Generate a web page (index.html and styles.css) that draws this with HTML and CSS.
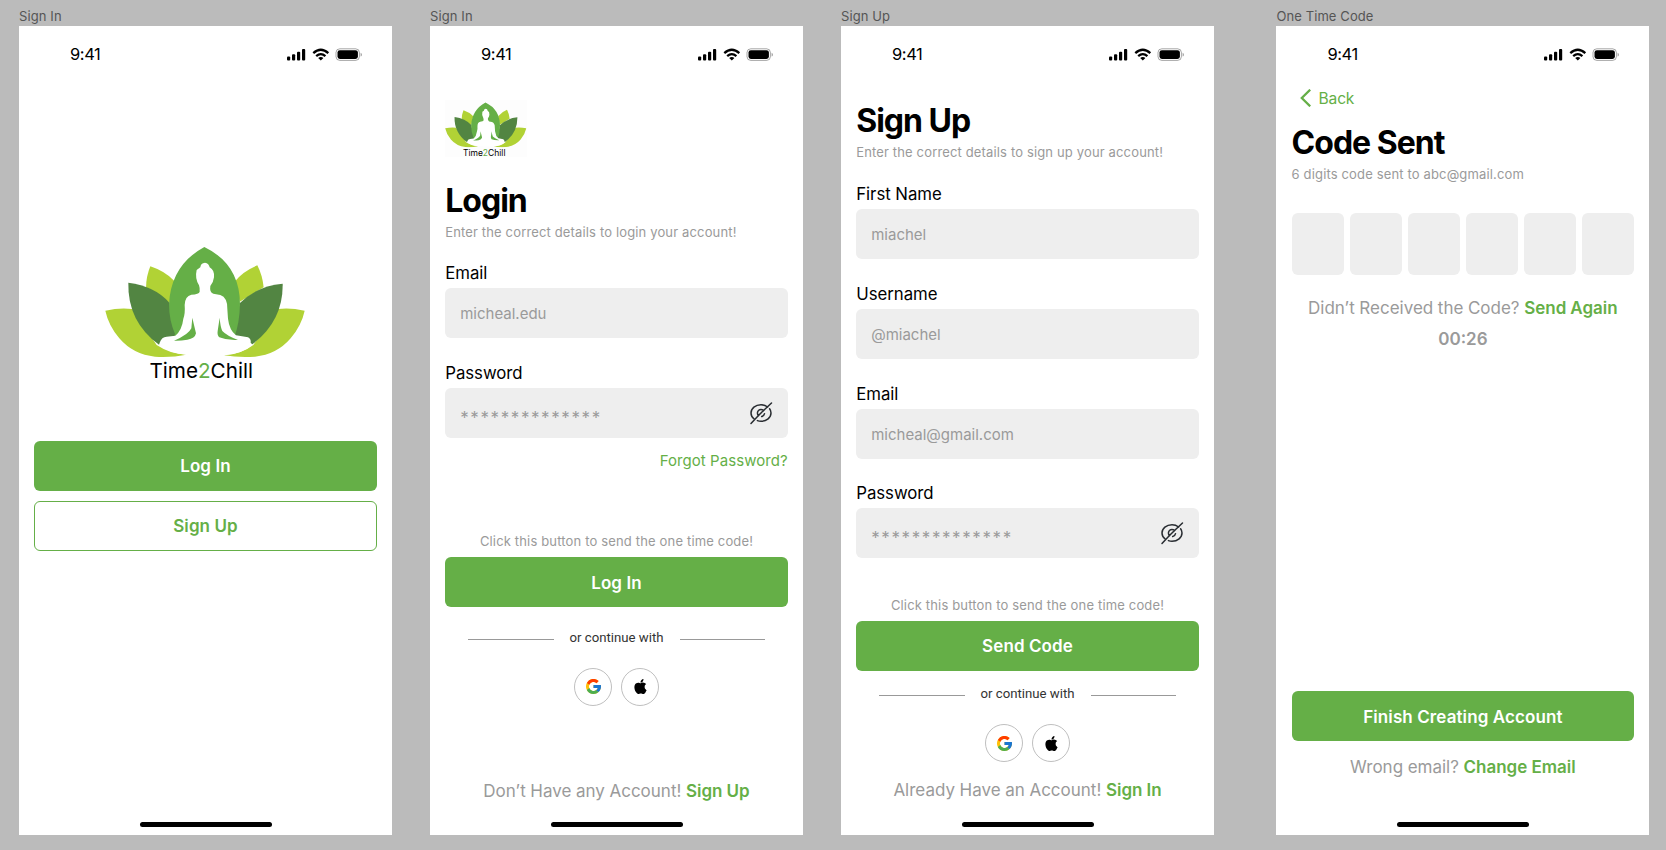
FILE: index.html
```html
<!DOCTYPE html>
<html lang="en">
<head>
<meta charset="utf-8">
<title>Time2Chill</title>
<link rel="stylesheet" href="styles.css">
</head>
<body>
<svg class="defs" aria-hidden="true">
  <symbol id="logo" viewBox="45 48 600 336">
    <path fill="#b1d235" d="M46 242Q90 232 126 237L200 345Q240 372 289 374Q245 383 195 380Q130 374 88 325Q55 285 46 242Z"/>
    <path fill="#b1d235" d="M644 242Q600 232 564 237L490 345Q455 372 402 376Q445 383 495 380Q560 374 602 325Q635 285 644 242Z"/>
    <path fill="#b1d235" d="M181 109Q226 124 253 153L238 220L168 175Q168 140 181 109Z"/>
    <path fill="#b1d235" d="M502 106Q460 123 436 153L449 215L521 172Q517 135 502 106Z"/>
    <path fill="#528542" d="M115 158Q195 168 238 218L262 318L208 345Q112 275 115 158Z"/>
    <path fill="#528542" d="M578 161Q500 168 449 220L430 318L484 345Q580 275 578 161Z"/>
    <path fill="#65af47" d="M343 51Q449 102 450 222Q449 278 433 322L445 333L250 333L255 312Q237 270 237 222Q243 105 343 51Z"/>
    <path fill="#fff" d="M345 98Q357 100 359 112Q374 120 372 142Q370 158 361 168Q358 188 370 191L391 195Q413 203 412 237L414 266Q418 300 438 316L474 322Q484 328 482 338L488 344Q455 372 402 376L289 374Q240 370 207 345L209 338Q215 320 230 320L256 317Q276 300 280 266Q286 250 284 225Q285 198 304 194Q327 193 329 185Q330 174 327 166Q314 145 320 120L331 112Q332 99 345 98Z"/>
    <path fill="#65af47" d="M307 263Q312 285 318 310Q315 326 292 329Q270 333 252 332Q296 314 304 295Z"/>
    <path fill="#65af47" d="M389 263Q391 290 397 303Q410 317 444 330Q412 332 388 322Q381 316 383 303Z"/>
  </symbol>
  <symbol id="status" viewBox="0 0 75 14">
    <rect x="0" y="8.5" width="3.2" height="4" rx="1"/><rect x="5" y="6.3" width="3.2" height="6.2" rx="1"/><rect x="10" y="3.8" width="3.2" height="8.7" rx="1"/><rect x="15" y="1" width="3.2" height="11.5" rx="1"/>
    <g fill="none" stroke="#000" stroke-width="2.3"><path d="M26.3 5.2Q33.8-1.6 41.3 5.2"/><path d="M29.2 8.2Q33.8 4.1 38.4 8.2"/></g>
    <path d="M31.2 9.9Q33.8 8 36.4 9.9L33.8 12.6Z"/>
    <rect x="49" y=".8" width="23.4" height="11.6" rx="3.8" fill="none" stroke="#000" stroke-opacity=".35"/>
    <rect x="50.500" y="2.2" width="20.4" height="8.8" rx="2.4"/>
    <path d="M73.600 4.8Q74.900 5.3 74.900 6.7Q74.900 8 73.600 8.6Z" opacity=".4"/>
  </symbol>
  <symbol id="eye" viewBox="0 0 24 24">
    <g fill="none" stroke="#292d32" stroke-width="1.5" stroke-linecap="round" stroke-linejoin="round"><path d="M14.53 9.47l-5.06 5.06a3.576 3.576 0 1 1 5.06-5.06z"/><path d="M18.600 6C16.600 4.400 14.300 3.730 12 3.730c-5.600 0-10 3.700-10 8.270 0 2.400 1.200 4.500 3.200 6M8.420 19.600c1.140.450 2.350.670 3.580.670 5.600 0 10-3.700 10-8.270 0-1.600-.5-3-1.400-4.200"/><path d="M15.51 12.7a3.565 3.565 0 0 1-2.820 2.820M9.470 14.530L2 22.500M22.500 2l-7.970 7.470"/></g>
  </symbol>
  <symbol id="google" viewBox="4 4 40 40">
    <path fill="#ffc107" d="M43.6 20.1H42V20H24v8h11.3A12 12 0 1 1 32 15l5.700-5.700A20 20 0 1 0 43.600 20.100z"/>
    <path fill="#ff3d00" d="M6.300 14.700l6.600 4.800A12 12 0 0 1 32 15l5.700-5.700A20 20 0 0 0 6.300 14.700z"/>
    <path fill="#4caf50" d="M24 44c5.200 0 9.900-2 13.400-5.200l-6.200-5.200A12 12 0 0 1 12.700 28l-6.500 5A20 20 0 0 0 24 44z"/>
    <path fill="#1976d2" d="M43.600 20.100H24v8h11.300a12 12 0 0 1-4.100 5.600l6.200 5.200C37 39.200 44 34 44 24c0-1.300-.1-2.600-.4-3.900z"/>
  </symbol>
  <symbol id="apple" viewBox="2 0 20 24">
    <path d="M12.152 6.896c-.948 0-2.415-1.078-3.960-1.040-2.040.027-3.910 1.183-4.961 3.014-2.117 3.675-.546 9.103 1.519 12.090 1.013 1.454 2.208 3.090 3.792 3.039 1.520-.065 2.090-.987 3.935-.987 1.831 0 2.350.987 3.960.948 1.637-.026 2.676-1.480 3.676-2.948 1.156-1.688 1.636-3.325 1.662-3.415-.039-.013-3.182-1.221-3.220-4.857-.026-3.040 2.480-4.494 2.597-4.559-1.429-2.090-3.623-2.324-4.390-2.376-2-.156-3.675 1.090-4.610 1.090zM15.530 3.830c.843-1.012 1.400-2.427 1.245-3.830-1.207.052-2.662.805-3.532 1.818-.780.896-1.454 2.338-1.273 3.714 1.338.104 2.715-.688 3.559-1.701"/>
  </symbol>
</svg>

<main class="board">
  <section class="frame">
    <h2 class="frame-name">Sign In</h2>
    <div class="phone">
      <header class="status"><time>9:41</time><svg><use href="#status"/></svg></header>
      <div class="body welcome">
        <div class="logo-large"><svg><use href="#logo"/></svg><p>Time<em>2</em>Chill</p></div>
        <button class="btn">Log In</button>
        <button class="btn outline">Sign Up</button>
      </div>
      <i class="home"></i>
    </div>
  </section>

  <section class="frame">
    <h2 class="frame-name">Sign In</h2>
    <div class="phone">
      <header class="status"><time>9:41</time><svg><use href="#status"/></svg></header>
      <div class="body login">
        <div class="logo-tile"><svg><use href="#logo"/></svg><p>Time<em>2</em>Chill</p></div>
        <h1>Login</h1>
        <p class="sub">Enter the correct details to login your account!</p>
        <label>Email</label>
        <div class="input">micheal.edu</div>
        <label>Password</label>
        <div class="input"><span class="stars">**************</span><svg class="eye"><use href="#eye"/></svg></div>
        <a class="forgot">Forgot Password?</a>
        <p class="hint">Click this button to send the one time code!</p>
        <button class="btn">Log In</button>
        <div class="divider"><span>or continue with</span></div>
        <div class="social"><span><svg class="g"><use href="#google"/></svg></span><span><svg class="a"><use href="#apple"/></svg></span></div>
        <p class="foot">Don’t Have any Account! <b>Sign Up</b></p>
      </div>
      <i class="home"></i>
    </div>
  </section>

  <section class="frame">
    <h2 class="frame-name">Sign Up</h2>
    <div class="phone">
      <header class="status"><time>9:41</time><svg><use href="#status"/></svg></header>
      <div class="body signup">
        <h1>Sign Up</h1>
        <p class="sub">Enter the correct details to sign up your account!</p>
        <label>First Name</label>
        <div class="input">miachel</div>
        <label>Username</label>
        <div class="input">@miachel</div>
        <label>Email</label>
        <div class="input">micheal@gmail.com</div>
        <label>Password</label>
        <div class="input"><span class="stars">**************</span><svg class="eye"><use href="#eye"/></svg></div>
        <p class="hint">Click this button to send the one time code!</p>
        <button class="btn">Send Code</button>
        <div class="divider"><span>or continue with</span></div>
        <div class="social"><span><svg class="g"><use href="#google"/></svg></span><span><svg class="a"><use href="#apple"/></svg></span></div>
        <p class="foot">Already Have an Account! <b>Sign In</b></p>
      </div>
      <i class="home"></i>
    </div>
  </section>

  <section class="frame last">
    <h2 class="frame-name">One Time Code</h2>
    <div class="phone">
      <header class="status"><time>9:41</time><svg><use href="#status"/></svg></header>
      <div class="body otp">
        <a class="back"><svg viewBox="0 0 11 18"><path d="M10.200 .7L1.800 9l8.400 8.300"/></svg>Back</a>
        <h1>Code Sent</h1>
        <p class="sub">6 digits code sent to abc@gmail.com</p>
        <div class="code"><i></i><i></i><i></i><i></i><i></i><i></i></div>
        <p class="foot again">Didn’t Received the Code? <b>Send Again</b></p>
        <p class="timer">00:26</p>
        <button class="btn">Finish Creating Account</button>
        <p class="foot wrong">Wrong email? <b>Change Email</b></p>
      </div>
      <i class="home"></i>
    </div>
  </section>
</main>
</body>
</html>
```

FILE: styles.css
```css
* { box-sizing: border-box; }
body { margin: 0; width: 1666px; height: 850px; overflow: hidden; background: #bbb; color: #000; font-family: Inter, "Liberation Sans", sans-serif; }
h1, h2, p { margin: 0; }
.defs { position: absolute; width: 0; height: 0; }
svg { display: block; }

.board { display: flex; gap: 38px; padding: 8px 0 0 19px; }
.frame { flex: none; width: 373px; }
.frame.last { margin-left: 24.400px; }
.frame-name { height: 18.300px; line-height: 16px; font-size: 13px; font-weight: 400; letter-spacing: .1px; color: #555; }
.phone { display: flex; flex-direction: column; height: 808.400px; background: #fff; }

.status { display: flex; flex: none; justify-content: space-between; height: 53.700px; padding: 18px 30px 0 51px; }
.status time { width: 30px; line-height: 20px; font-size: 16.500px; letter-spacing: -.4px; }
.status svg { width: 75px; height: 14px; margin-top: 3.700px; }

.body { display: flex; flex: 1; flex-direction: column; padding: 0 15.200px; white-space: nowrap; }
.home { flex: none; align-self: center; width: 132px; height: 5px; margin: 0 0 7.500px; border-radius: 3px; background: #000; }

.btn { flex: none; height: 50px; padding: 1px 0 0; border: 0; border-radius: 6px; background: #65af47; color: #fff; font: 600 17px/20px Inter, sans-serif; letter-spacing: .1px; }
.btn.outline { margin-top: 10px; border: 1px solid #65af47; background: #fff; color: #65af47; }

.logo-large { width: 200px; margin: 166px 0 57.700px 70.500px; }
.logo-large svg { width: 200px; height: 112px; }
.logo-large p { padding: 1px 7px 0 0; text-align: center; font-size: 20.700px; line-height: 24px; }
.logo-large em, .logo-tile em { font-style: normal; color: #65af47; }
.logo-tile { width: 82px; height: 57px; margin: 20px 0 24px; padding-top: 2px; background: #fdfdfd; }
.logo-tile svg { width: 81.500px; height: 45.600px; }
.logo-tile p { padding-right: 4px; text-align: center; font-size: 8.500px; line-height: 10px; }

h1 { line-height: 40px; font-size: 32px; font-weight: 700; letter-spacing: -1px; }
.sub, .hint { line-height: 16px; font-size: 13px; letter-spacing: .15px; color: #9a9a9a; }
.hint { text-align: center; letter-spacing: .16px; }
label { line-height: 20px; font-size: 16.800px; letter-spacing: -.03px; margin-bottom: 5px; }
.input { display: flex; flex: none; align-items: center; justify-content: space-between; height: 50px; margin-bottom: 24.700px; padding: 1px 15px 0; border-radius: 6px; background: #eee; color: #9a9a9a; font-size: 15px; }
.stars { padding-top: 9px; font-size: 17px; letter-spacing: 1.600px; }
.eye { width: 24px; height: 24px; margin: -1px -.5px 0 0; }
.forgot { align-self: flex-end; line-height: 18px; font-size: 15px; letter-spacing: .07px; color: #65af47; }

.divider { display: flex; justify-content: center; gap: 16px; font: 13.200px/16px Roboto, sans-serif; color: #333; }
.divider::before, .divider::after { content: ""; width: 85.500px; height: 1px; margin-top: 9px; background: #999; }
.social { display: flex; justify-content: center; gap: 9px; }
.social span { display: flex; align-items: center; justify-content: center; width: 38px; height: 38px; border: 1px solid #bfbfbf; border-radius: 50%; }
.g { width: 15px; height: 15px; }
.a { width: 13px; height: 15px; }
.foot { text-align: center; line-height: 20px; font-size: 17px; word-spacing: -.2px; color: #9a9a9a; }
.foot b { font-weight: 600; color: #65af47; }

.login .sub { margin: 3px 0 23.500px; }
.login .forgot { margin-top: -11.200px; }
.login .hint { margin: 63.500px 0 8px; }
.login .divider { margin-top: 22.700px; }
.login .social { margin-top: 22px; }
.login .foot { margin-top: 75px; }

.signup h1 { margin-top: 21px; }
.signup .sub { margin: 3.200px 0 24.200px; }
.signup .input { margin-bottom: 24.600px; }
.signup .hint { margin: 14.200px 0 7.700px; }
.signup .divider { margin-top: 15.500px; }
.signup .social { margin-top: 22px; }
.signup .foot { margin-top: 18px; }

.back { display: flex; align-items: center; gap: 7.500px; height: 20px; margin: 8.500px 0 0 8.500px; font-size: 15.600px; letter-spacing: -.2px; color: #65af47; }
.back svg { width: 11px; height: 18px; fill: none; stroke: #65af47; stroke-width: 2.300; }
.otp h1 { margin-top: 14.500px; }
.otp .sub { margin-top: 3px; }
.code { display: grid; grid-template-columns: repeat(6, 1fr); gap: 6px; margin-top: 31.500px; }
.code i { height: 62px; border-radius: 6px; background: #eee; }
.again { margin-top: 23px; }
.timer { margin-top: 11px; text-align: center; line-height: 20px; font-size: 17px; font-weight: 600; color: #9a9a9a; }
.otp .btn { margin-top: 341.800px; }
.wrong { margin-top: 15.800px; }
```
